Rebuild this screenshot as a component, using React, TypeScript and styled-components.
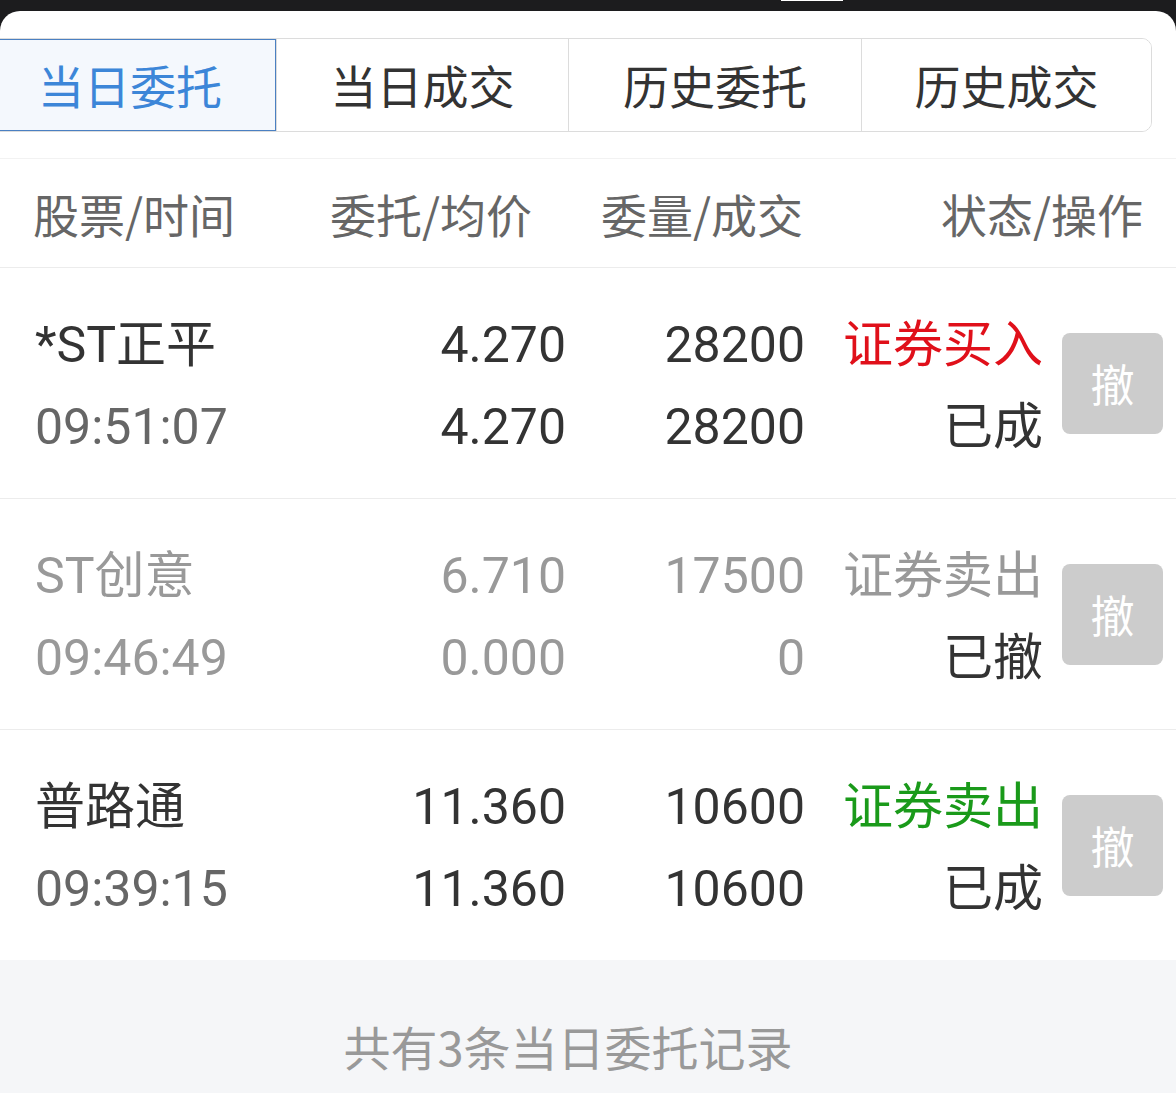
import React from "react";
import styled, { createGlobalStyle } from "styled-components";

type Side = "buy" | "sell" | "none";

interface Order {
  name: string;
  time: string;
  price: string;
  avgPrice: string;
  volume: string;
  dealt: string;
  side: Side;
  action: string;
  status: string;
  muted?: boolean;
}

const orders: Order[] = [
  {
    name: "*ST正平",
    time: "09:51:07",
    price: "4.270",
    avgPrice: "4.270",
    volume: "28200",
    dealt: "28200",
    side: "buy",
    action: "证券买入",
    status: "已成",
  },
  {
    name: "ST创意",
    time: "09:46:49",
    price: "6.710",
    avgPrice: "0.000",
    volume: "17500",
    dealt: "0",
    side: "none",
    action: "证券卖出",
    status: "已撤",
    muted: true,
  },
  {
    name: "普路通",
    time: "09:39:15",
    price: "11.360",
    avgPrice: "11.360",
    volume: "10600",
    dealt: "10600",
    side: "sell",
    action: "证券卖出",
    status: "已成",
  },
];

const tabs = ["当日委托", "当日成交", "历史委托", "历史成交"];

const App: React.FC = () => {
  return (
    <>
      <GlobalStyle />
      <StatusBar>
        <Notch />
      </StatusBar>
      <Sheet>
        <Tabs>
          {tabs.map((t, i) => (
            <Tab key={t} $active={i === 0}>
              {t}
            </Tab>
          ))}
        </Tabs>
        <Header>
          <HeadCell>股票/时间</HeadCell>
          <HeadCell>委托/均价</HeadCell>
          <HeadCell>委量/成交</HeadCell>
          <HeadCell $right>状态/操作</HeadCell>
        </Header>
        {orders.map((o) => (
          <Row key={o.name}>
            <Cell>
              <Line $tone={o.muted ? "muted" : "main"}>{o.name}</Line>
              <Line $tone={o.muted ? "muted" : "sub"}>{o.time}</Line>
            </Cell>
            <Cell $right>
              <Line $tone={o.muted ? "muted" : "main"}>{o.price}</Line>
              <Line $tone={o.muted ? "muted" : "main"}>{o.avgPrice}</Line>
            </Cell>
            <Cell $right>
              <Line $tone={o.muted ? "muted" : "main"}>{o.volume}</Line>
              <Line $tone={o.muted ? "muted" : "main"}>{o.dealt}</Line>
            </Cell>
            <Cell $right>
              <Line $tone={o.side === "buy" ? "red" : o.side === "sell" ? "green" : "muted"}>
                {o.action}
              </Line>
              <Line $tone="main">{o.status}</Line>
            </Cell>
            <CancelButton>撤</CancelButton>
          </Row>
        ))}
        <Footer>共有3条当日委托记录</Footer>
      </Sheet>
    </>
  );
};

const GlobalStyle = createGlobalStyle`
  html, body {
    margin: 0;
    padding: 0;
    background: #f5f6f8;
    font-family: Roboto, "Noto Sans CJK SC", sans-serif;
  }
  * {
    box-sizing: border-box;
  }
`;

const StatusBar = styled.div`
  height: 40px;
  margin-bottom: -29px;
  background: #1c1c1e;
  display: flex;
  justify-content: center;
  padding-left: 448px;
`;

const Notch = styled.div`
  width: 62px;
  height: 1px;
  background: #fff;
`;

const Sheet = styled.div`
  position: relative;
  background: #fff;
  border-radius: 20px 20px 0 0;
  overflow: hidden;
  padding-top: 27px;
`;

const Tabs = styled.div`
  display: grid;
  grid-template-columns: 292px 292px 293px 1fr;
  height: 94px;
  margin: 0 24px 0 -17px;
  border: 1px solid #dcdcdc;
  border-radius: 10px;
  overflow: hidden;
`;

const Tab = styled.div<{ $active?: boolean }>`
  display: flex;
  align-items: center;
  justify-content: center;
  padding-bottom: 2px;
  font-family: "Noto Sans CJK SC", sans-serif;
  font-size: 46px;
  color: ${(p) => (p.$active ? "#3c86d8" : "#333")};
  background: ${(p) => (p.$active ? "#f4f8fd" : "#fff")};
  border-left: 1px solid #dcdcdc;
  ${(p) => (p.$active ? "outline: 1px solid #4a80c2; outline-offset: -1px;" : "")}

  &:first-child {
    border-left: none;
  }
`;

const Header = styled.div`
  display: grid;
  grid-template-columns: 297px 271px 1fr auto;
  align-items: center;
  height: 110px;
  margin-top: 26px;
  padding: 0 33px;
  border-top: 1px solid #f2f2f2;
  border-bottom: 1px solid #ececec;
`;

const HeadCell = styled.div<{ $right?: boolean }>`
  font-family: "Noto Sans CJK SC", sans-serif;
  font-size: 46px;
  color: #666;
  text-align: ${(p) => (p.$right ? "right" : "left")};
`;

const Row = styled.div`
  display: grid;
  grid-template-columns: 295px 236px 239px 238px 101px;
  align-items: center;
  padding: 36px 13px 30px 35px;
  border-bottom: 1px solid #ececec;

  & > :last-child {
    margin-left: 19px;
    margin-top: -6px;
  }
`;

const Cell = styled.div<{ $right?: boolean }>`
  display: flex;
  flex-direction: column;
  align-items: ${(p) => (p.$right ? "flex-end" : "flex-start")};
  padding-right: ${(p) => (p.$right ? "0" : "0")};
`;

const toneColor: Record<string, string> = {
  main: "#333",
  sub: "#666",
  muted: "#999",
  red: "#e0101a",
  green: "#1a9a1a",
};

const Line = styled.div<{ $tone: string }>`
  font-size: 50px;
  line-height: 82px;
  white-space: nowrap;
  color: ${(p) => toneColor[p.$tone]};
`;

const CancelButton = styled.div`
  width: 101px;
  height: 101px;
  border-radius: 8px;
  background: #cccccc;
  color: #fff;
  font-family: "Noto Sans CJK SC", sans-serif;
  font-size: 44px;
  display: flex;
  align-items: center;
  justify-content: center;
`;

const Footer = styled.div`
  background: #f5f6f8;
  text-align: center;
  font-family: "Noto Sans CJK SC", sans-serif;
  font-size: 47px;
  line-height: 60px;
  color: #999;
  padding: 56px 40px 40px 0;
  margin-top: -1px;
`;

export default App;
